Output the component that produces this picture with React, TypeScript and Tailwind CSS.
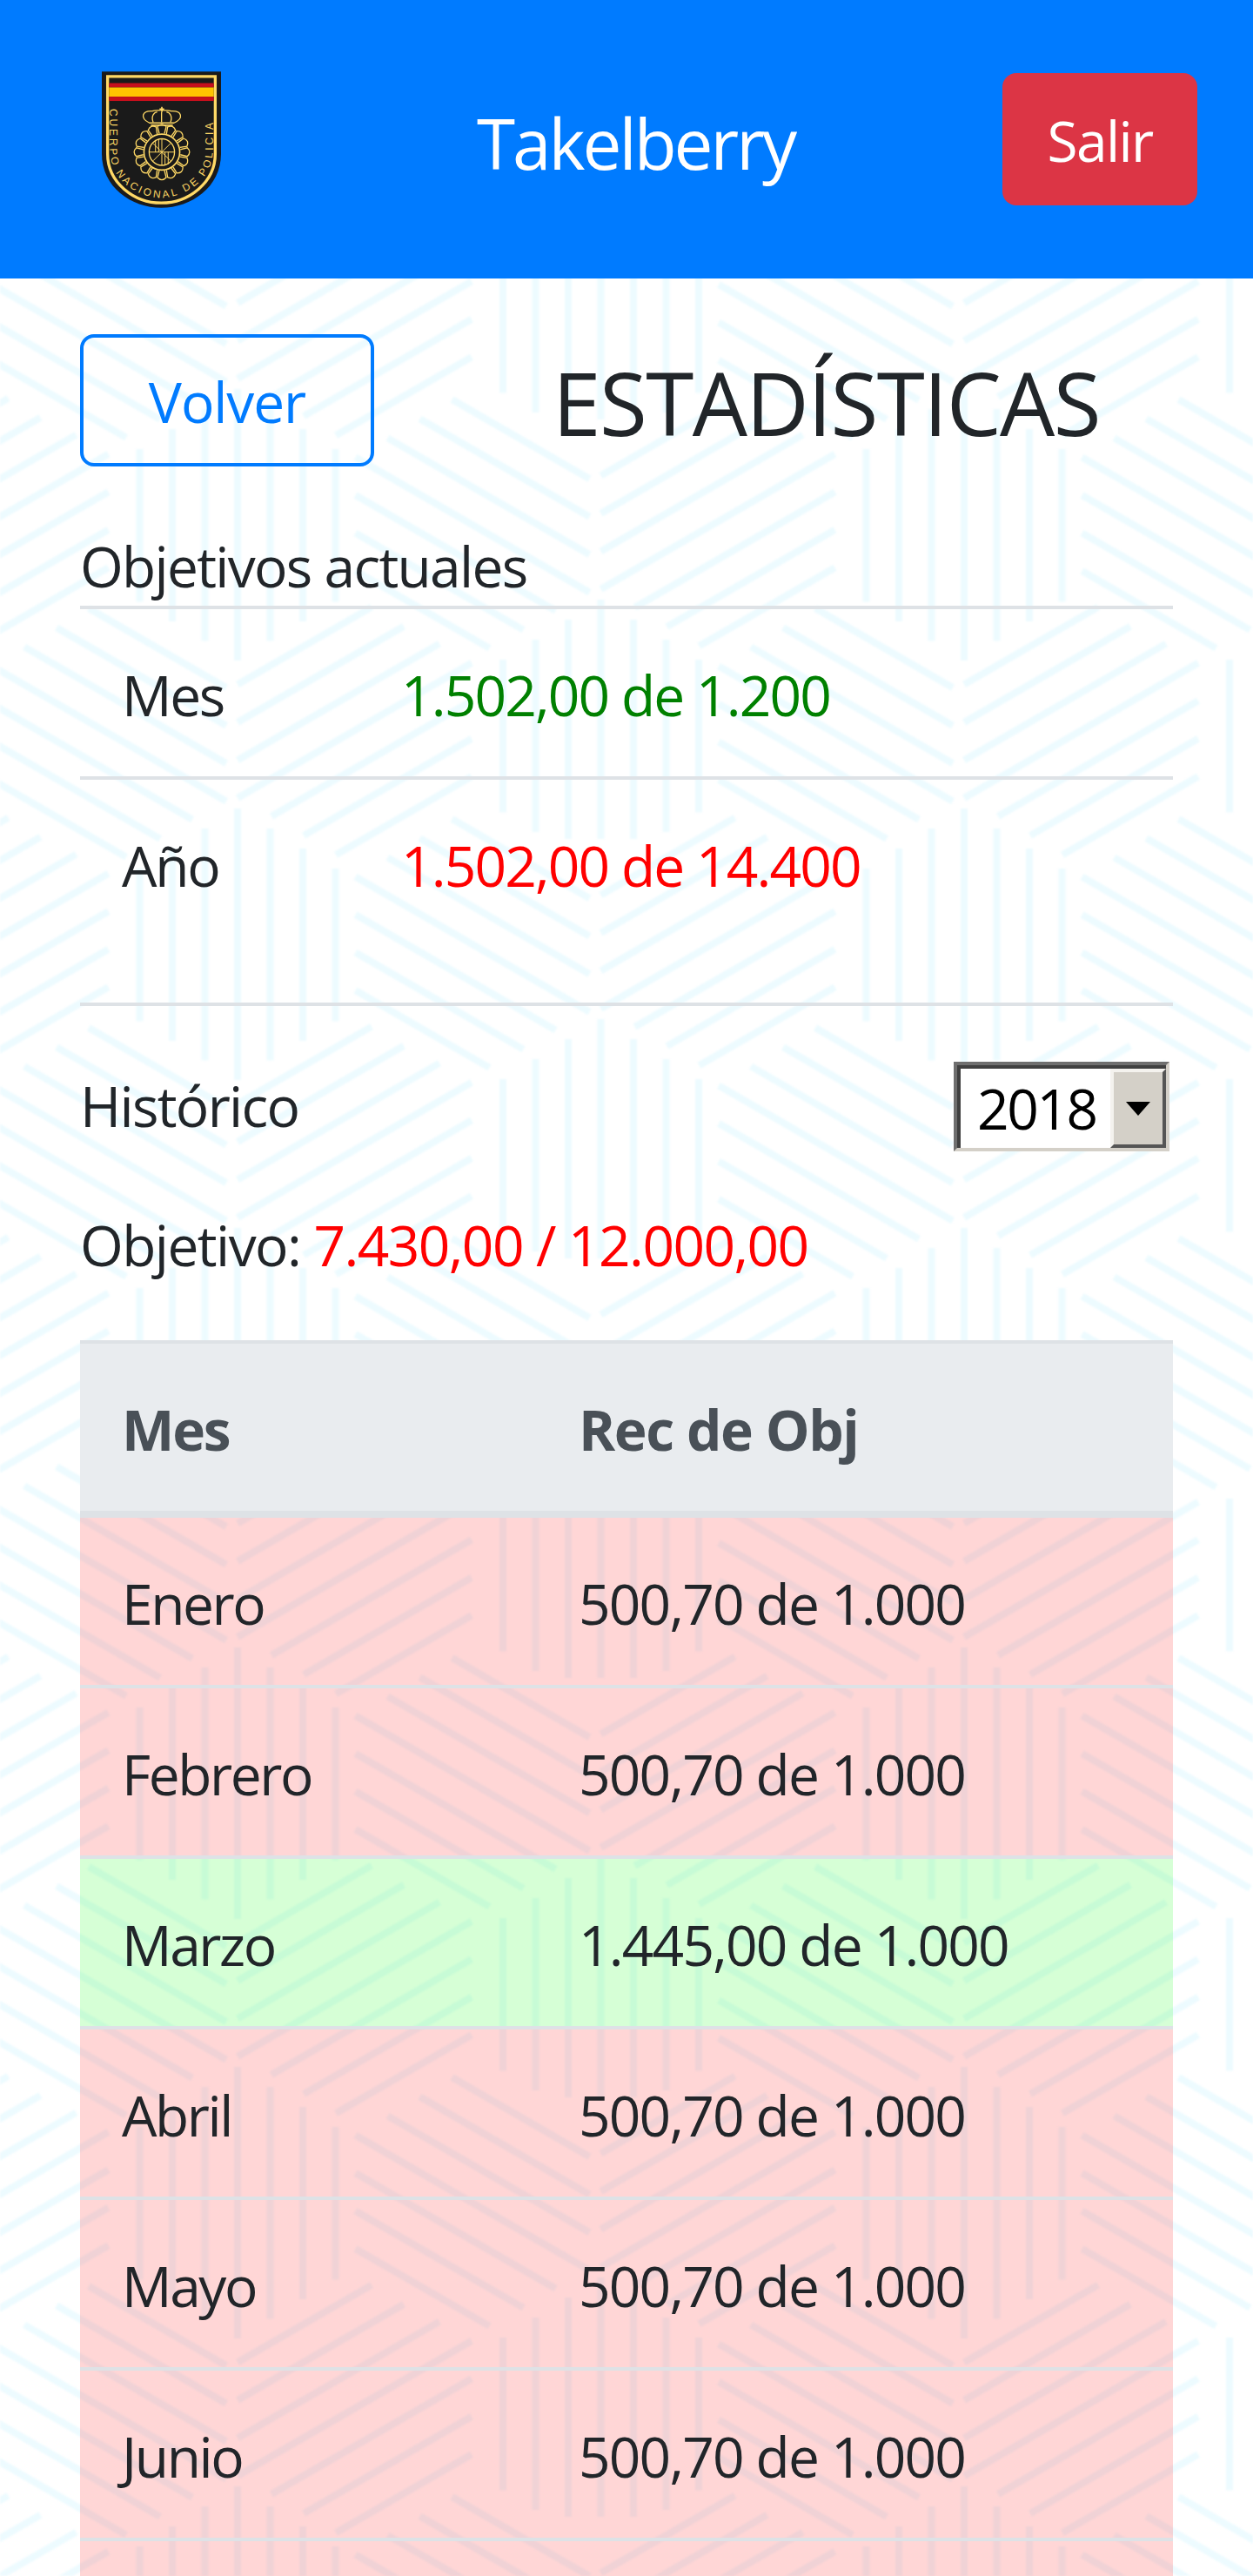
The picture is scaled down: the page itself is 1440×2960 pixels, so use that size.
const SLOPE = 0.577;

// one diamond of vertical lines plus the two chevron arms that sit above it
function tileLines(cx: number, top: number) {
  const lines: { x1: number; y1: number; x2: number; y2: number }[] = [];
  for (let k = -3; k <= 3; k++) {
    const x = cx + k * 37.5;
    lines.push({ x1: x, y1: top + Math.abs(k) * 23, x2: x, y2: top + 312 - Math.abs(k) * 22.5 });
  }
  const backStart = [171, 208, 245, 282, 282, 282, 282];
  const backEnd = [13, 13, 13, 13, 52, 89, 128];
  const fwdStart = [0, 0, 0, 0, 39, 76, 113];
  const fwdEnd = [154, 191, 232, 269, 269, 269, 269];
  for (let i = 0; i < 7; i++) {
    const yBack = (x: number) => top - 294 + 43.5 * i + (x - (cx - 282)) * SLOPE;
    const xa = cx - backStart[i];
    const xb = cx - backEnd[i];
    lines.push({ x1: xa, y1: yBack(xa), x2: xb, y2: yBack(xb) });
    const yFwd = (x: number) => top - 142.5 + 43.5 * i - (x - cx) * SLOPE;
    const xc = cx + fwdStart[i];
    const xd = cx + fwdEnd[i];
    lines.push({ x1: xc, y1: yFwd(xc), x2: xd, y2: yFwd(xd) });
  }
  return lines;
}

function Background() {
  const all: { x1: number; y1: number; x2: number; y2: number }[] = [];
  for (const dx of [-835, 0, 835]) {
    for (const dy of [-482, 0, 482]) {
      all.push(...tileLines(273 + dx, 447 + dy));
      all.push(...tileLines(690.5 + dx, 689 + dy));
    }
  }
  return (
    <svg className="absolute inset-0 w-[1440px] h-[2960px] blur-[1.2px]" aria-hidden="true">
      <defs>
        <pattern id="hexlines" patternUnits="userSpaceOnUse" width="835" height="482">
          {all.map((l, i) => (
            <line key={i} {...l} stroke="#edfbff" strokeWidth="8" />
          ))}
        </pattern>
      </defs>
      <rect width="1440" height="2960" fill="url(#hexlines)" />
    </svg>
  );
}

function PoliceBadge() {
  const gold = "#ffd966";
  const rays = Array.from({ length: 16 }, (_, i) => (i * 360) / 16);
  return (
    <svg viewBox="0 0 413 472" className="w-[137px] h-[157px] shrink-0">
      <path d="M0 0H413V285C413 400 310 472 206 472C102 472 0 400 0 285Z" fill="#1a1a1a" />
      <path
        d="M20 17H393V285C393 385 300 455 206 455C112 455 20 385 20 285Z"
        fill="none"
        stroke={gold}
        strokeWidth="10"
      />
      <rect x="25" y="40" width="363" height="15" fill="#c60f1c" />
      <rect x="25" y="55" width="363" height="32" fill="#ffc400" />
      <rect x="25" y="87" width="363" height="15" fill="#c60f1c" />
      <path id="badge-arc" d="M28 129V270C28 370 110 432 206 438C300 432 385 370 385 270V132" fill="none" />
      <text fill={gold} fontSize="36" fontFamily="Liberation Sans, sans-serif">
        <textPath href="#badge-arc" textLength="775" lengthAdjust="spacing">
          CUERPO NACIONAL DE POLICIA
        </textPath>
      </text>
      <g fill="none" stroke={gold} strokeWidth="4" transform="translate(208 279)">
        <circle r="62" strokeWidth="5" />
        <ellipse rx="44" ry="46" />
        {rays.map((a) => (
          <g key={a} transform={`rotate(${a})`}>
            <path d="M-9 -64L-15 -88Q0 -104 15 -88L9 -64" />
          </g>
        ))}
        <path d="M0 -46V46M-44 0H44M-30 -30L30 30M-30 30L30 -30" strokeWidth="3" />
        <path d="M-22 -42V0M-11 -44V0M11 0V44M22 0V42" strokeWidth="3" />
      </g>
      <g fill="none" stroke={gold} strokeWidth="4">
        <path d="M165 178C130 160 140 135 175 137C190 133 225 133 240 137C278 135 285 162 250 178Z" />
        <path d="M178 176C170 155 180 142 192 140M238 176C246 155 236 142 224 140M207 176V140" />
        <path d="M170 186H246" strokeWidth="5" />
        <path d="M208 122V140M200 130H216" strokeWidth="5" />
      </g>
    </svg>
  );
}

// windows classic style dropdown, the picture shows the old native control
function YearSelect() {
  return (
    <div className="w-[248px] h-[103px] border-[4px] border-t-[#6f6f6f] border-l-[#6f6f6f] border-r-[#d4d0c8] border-b-[#d4d0c8]">
      <div className="flex h-[95px] border-t-[4px] border-l-[4px] border-[#404040]">
        <div className="flex-1 bg-white text-black text-[64px] leading-[92px] pl-[19px] tracking-[-2.4px]">2018</div>
        <div className="w-[64px] h-[91px] flex items-center justify-center bg-[#d4d0c8] border-[4px] border-t-[#f4f2ee] border-l-[#f4f2ee] border-r-[#555555] border-b-[#555555]">
          <svg width="28" height="16" viewBox="0 0 28 16">
            <path d="M0 0H28L14 16Z" fill="#000" />
          </svg>
        </div>
      </div>
    </div>
  );
}

const months = [
  { name: "Enero", value: "500,70 de 1.000", ok: false },
  { name: "Febrero", value: "500,70 de 1.000", ok: false },
  { name: "Marzo", value: "1.445,00 de 1.000", ok: true },
  { name: "Abril", value: "500,70 de 1.000", ok: false },
  { name: "Mayo", value: "500,70 de 1.000", ok: false },
  { name: "Junio", value: "500,70 de 1.000", ok: false },
];

export default function App() {
  return (
    <div className="relative w-[1440px] h-[2960px] overflow-hidden bg-white font-['Open_Sans',sans-serif] text-[64px] leading-[96px] text-[#212529] tracking-[-1.7px]">
      <Background />
      <div className="relative">
        <header className="h-[320px] bg-[#007bff] flex items-start">
          <div className="ml-[117px] mt-[82px]">
            <PoliceBadge />
          </div>
          <h1 className="ml-[294px] mt-[104px] text-white text-[80px] leading-[120px] tracking-[-3px]">Takelberry</h1>
          <button className="ml-auto mr-[64px] mt-[84px] w-[224px] h-[152px] pt-[3px] rounded-[16px] bg-[#dc3545] text-white tracking-[-1.6px]">
            Salir
          </button>
        </header>

        <main className="px-[92px]">
          <div className="pt-[64px] flex items-center">
            <button className="w-[338px] h-[152px] pt-[3px] border-[4px] border-[#007bff] rounded-[16px] text-[#007bff] tracking-[-1.1px]">
              Volver
            </button>
            <h2 className="ml-[205px] pt-[4px] text-[100px] leading-[120px] tracking-[-1.6px]">ESTADÍSTICAS</h2>
          </div>

          <p className="mt-[67px] mb-[-3px]">Objetivos actuales</p>
          <table className="w-full border-separate border-spacing-0 table-fixed">
            <tbody>
              <tr>
                <td className="w-[369px] border-t-[4px] border-[#dee2e6] pt-[51px] pb-[45px] pl-[48px] tracking-[-2.4px]">Mes</td>
                <td className="border-t-[4px] border-[#dee2e6] pt-[51px] pb-[45px] text-[#008000] tracking-[-1.85px]">1.502,00 de 1.200</td>
              </tr>
              <tr>
                <td className="border-t-[4px] border-[#dee2e6] pt-[51px] pb-[45px] pl-[48px] tracking-[-2.2px]">Año</td>
                <td className="border-t-[4px] border-[#dee2e6] pt-[51px] pb-[45px] text-[#ff0000] tracking-[-1.85px]">1.502,00 de 14.400</td>
              </tr>
            </tbody>
          </table>
          <hr className="mt-[64px] border-t-[4px] border-[#dee2e6]" />

          <div className="mt-[64px] flex items-start justify-between pr-[4px]">
            <span className="pt-[3px]">Histórico</span>
            <YearSelect />
          </div>
          <p className="mt-[60px] mb-[-3px] tracking-[-1.55px]">
            Objetivo: <span className="text-[#ff0000]">7.430,00 / 12.000,00</span>
          </p>

          <table className="mt-[64px] w-full border-separate border-spacing-0 table-fixed">
            <thead>
              <tr className="bg-[#e9ecef] text-[#495057] text-left tracking-[-1.4px]">
                <th className="w-[525px] border-t-[4px] border-b-[8px] border-[#dee2e6] px-[48px] pt-[51px] pb-[45px] font-bold tracking-[-2.2px]">Mes</th>
                <th className="border-t-[4px] border-b-[8px] border-[#dee2e6] px-[48px] pt-[51px] pb-[45px] font-bold">Rec de Obj</th>
              </tr>
            </thead>
            <tbody>
              {months.map((m, i) => (
                <tr key={m.name} className={m.ok ? "bg-[#00ff0029]" : "bg-[#ff000029]"}>
                  <td className={`${i > 0 ? "border-t-[4px]" : ""} border-[#dee2e6] px-[48px] pt-[51px] pb-[45px] tracking-[-2.4px]`}>{m.name}</td>
                  <td className={`${i > 0 ? "border-t-[4px]" : ""} border-[#dee2e6] px-[48px] pt-[51px] pb-[45px] tracking-[-1.8px]`}>{m.value}</td>
                </tr>
              ))}
              {/* next row is below the fold in the picture, only its top shows */}
              <tr className="bg-[#ff000029]">
                <td colSpan={2} className="border-t-[4px] border-[#dee2e6] h-[196px]"></td>
              </tr>
            </tbody>
          </table>
        </main>
      </div>
    </div>
  );
}
